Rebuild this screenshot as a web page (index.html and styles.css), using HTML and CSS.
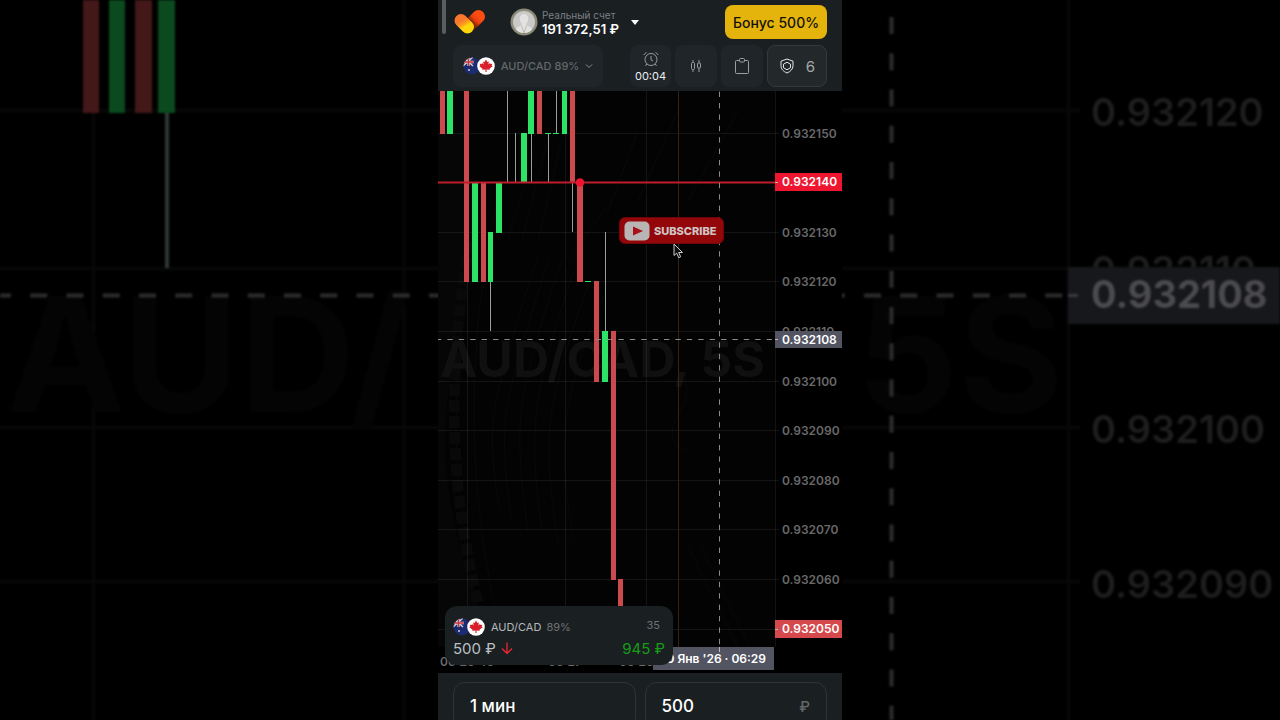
FILE: index.html
```html
<!DOCTYPE html>
<html lang="ru">

<head>
    <meta charset="UTF-8">
    <meta name="viewport" content="width=device-width, initial-scale=1.0">
    <title>AUD/CAD</title>
    <link rel="stylesheet" href="styles.css">
</head>

<body>
    <!-- Shared icons -->
    <svg class="sprite" aria-hidden="true">
        <symbol id="flags" viewBox="0 0 32 18">
            <clipPath id="auClip"><circle cx="9" cy="9" r="8.500" /></clipPath>
            <g clip-path="url(#auClip)">
                <rect width="18" height="18" fill="#1c2a70" />
                <path d="M0 0l10 9M10 0L0 9" stroke="#ccc" stroke-width="1.500" />
                <path d="M5.500 0v9M0 5h11" stroke="#ddd" stroke-width="2.400" />
                <path d="M5.500 0v9M0 5h11" stroke="#c8323c" stroke-width="1.400" />
                <circle cx="6" cy="13" r="0.900" fill="#ddd" />
            </g>
            <circle cx="23" cy="9" r="8.800" fill="#fff" />
            <path d="M23 2.500l1.400 2.600 1.500-.7-.6 3.200 1.700-1.600.5 1.100 1.800-.3-.6 1.900.9.500-3.100 2.500.3 1.100-3.300-.4.100 2.700h-1.200l.1-2.700-3.300.4.300-1.100-3.100-2.500.9-.5-.6-1.900 1.800.3.500-1.100 1.700 1.600-.6-3.200 1.500.7z" fill="#d8202c" />
        </symbol>
    </svg>

    <!-- Enlarged dim chart behind the phone -->
    <svg class="backdrop" viewBox="0 0 1280 720" preserveAspectRatio="xMidYMid slice" aria-hidden="true">
        <g class="backdrop-grid">
            <path d="M0 110.500H1080M0 268.500H1080M0 427.500H1080M0 581.500H1080" />
            <path d="M93.500 0V720M404 0V720M1068.500 0V720" />
        </g>
        <text class="backdrop-mark" x="6" y="412">AUD/</text>
        <text class="backdrop-mark" x="856" y="412">5S</text>
        <g class="backdrop-red">
            <rect x="83" y="0" width="16" height="113" />
            <rect x="135" y="0" width="17" height="113" />
        </g>
        <g class="backdrop-green">
            <rect x="109" y="0" width="16" height="113" />
            <rect x="158" y="0" width="17" height="113" />
        </g>
        <rect class="backdrop-wick" x="165" y="113" width="4" height="155" />
        <path class="backdrop-cross" d="M-6 295.500H1068" />
        <path class="backdrop-cross" d="M891.500 17V720" />
        <g class="backdrop-price">
            <text x="1091" y="126">0.932120</text>
            <text x="1091" y="284">0.932110</text>
            <text x="1091" y="443">0.932100</text>
            <text x="1091" y="598">0.932090</text>
        </g>
        <rect class="backdrop-tag" x="1068" y="267" width="212" height="57" />
        <path class="backdrop-tick" d="M1068 295.500h10" />
        <text class="backdrop-current" x="1091" y="308">0.932108</text>
    </svg>

    <main class="phone">
        <header class="top">
            <span class="scroll-thumb"></span>
            <div class="row">
                <svg class="logo" viewBox="0 0 32 26" role="img" aria-label="Логотип">
                    <defs>
                        <linearGradient id="logoLeft" x1="0" y1="0" x2="0.600" y2="1">
                            <stop offset="0" stop-color="#f7772d" />
                            <stop offset="0.500" stop-color="#fb961c" />
                            <stop offset="1" stop-color="#ffd60c" />
                        </linearGradient>
                        <linearGradient id="logoRight" x1="1" y1="0" x2="0" y2="1">
                            <stop offset="0" stop-color="#ff4d12" />
                            <stop offset="0.500" stop-color="#e8400c" />
                            <stop offset="1" stop-color="#7c2408" />
                        </linearGradient>
                    </defs>
                    <path d="M24.500 7.500L18 14" fill="none" stroke="url(#logoRight)" stroke-width="13" stroke-linecap="round" />
                    <path d="M7 11.500L13.500 18" fill="none" stroke="url(#logoLeft)" stroke-width="13" stroke-linecap="round" />
                </svg>
                <button class="account" type="button">
                    <svg class="avatar" viewBox="0 0 28 28">
                        <clipPath id="avatarClip"><circle cx="14" cy="14" r="11" /></clipPath>
                        <circle cx="14" cy="14" r="13.500" fill="#8c8a78" />
                        <circle cx="14" cy="14" r="11" fill="#c9c9c7" />
                        <g clip-path="url(#avatarClip)">
                            <path d="M5 26c0-6 3-7.500 6.500-8.500v-2c-1.300-1.500-1.700-3-1.700-5C9.800 7.500 11.500 6 14 6s4.200 1.500 4.200 4.500c0 2-.4 3.500-1.700 5v2C20 18.500 23 20 23 26z" fill="#e4e2e0" />
                            <path d="M11.500 17.500L14 25l2.500-7.500" fill="none" stroke="#bcbcba" />
                        </g>
                    </svg>
                    <span class="account-text">
                        <span class="account-name">Реальный счет</span>
                        <strong class="account-sum">191 372,51 ₽</strong>
                    </span>
                    <svg class="caret" viewBox="0 0 8 5"><path d="M0 0h8L4 5z" fill="#fff" /></svg>
                </button>
                <button class="bonus" type="button">Бонус 500%</button>
            </div>
            <div class="row tools">
                <button class="tool pair" type="button">
                    <svg class="flags"><use href="#flags" /></svg>
                    <span>AUD/CAD 89%</span>
                    <svg class="chevron" viewBox="0 0 8 6"><path d="M1 1.500l3 3 3-3" /></svg>
                </button>
                <button class="tool timer" type="button">
                    <svg class="icon" viewBox="0 0 16 16">
                        <circle cx="8" cy="8.500" r="6" />
                        <path d="M8 5v3.800l2 1.200M0.700 4l2.800-2.800M15.300 4l-2.800-2.800M3.800 13l-1.300 1.800M12.200 13l1.300 1.800" />
                    </svg>
                    <span>00:04</span>
                </button>
                <button class="tool" type="button" aria-label="Тип графика">
                    <svg class="icon" viewBox="0 0 16 16">
                        <path d="M5 2v2.500M5 11.500v2.500M11 2v3M11 10v4" />
                        <rect x="3.500" y="4.500" width="3" height="7" rx="1" />
                        <rect x="9.500" y="5" width="3" height="5" rx="1" />
                    </svg>
                </button>
                <button class="tool" type="button" aria-label="Сделки">
                    <svg class="icon" viewBox="0 0 16 16">
                        <path d="M5.500 2.500h-3a1 1 0 0 0-1 1v11a1 1 0 0 0 1 1h11a1 1 0 0 0 1-1v-11a1 1 0 0 0-1-1h-3" />
                        <rect x="5.500" y="0.500" width="5" height="3.500" rx="1" />
                    </svg>
                </button>
                <button class="tool shield" type="button">
                    <svg class="icon" viewBox="0 0 16 16">
                        <path d="M8 1l6 2.200v4.500c0 3.500-2.500 5.800-6 7.300-3.500-1.500-6-3.800-6-7.300V3.200z" />
                        <path d="M8 4.200l3.500 2v3.600L8 11.800l-3.500-2V6.200z" />
                    </svg>
                    <span>6</span>
                </button>
            </div>
        </header>

        <section class="chart">
            <svg class="chart-plot" viewBox="0 0 404 582" role="img" aria-label="График AUD/CAD">
                <rect width="404" height="582" fill="#000" />
                <rect width="337" height="556" fill="#030303" />

                <!-- Coin engraving -->
                <g class="engraving">
                    <path d="M0 0h29v190Q4 300 8 380Q20 480 60 556H0z" fill="#060606" stroke="none" />
                    <path d="M44 115Q-10 340 48 556M58 115Q10 340 66 556" />
                    <path d="M32 150Q-5 350 45 530" stroke-width="11" stroke-dasharray="12 4" />
                    <path d="M100 165Q72 250 60 300T62 420M112 165Q84 250 72 300T74 430M124 170Q96 250 86 300T90 440M136 180Q108 260 100 310T104 440M150 195Q122 270 114 320T120 450M166 205Q134 280 128 330T136 450" />
                    <path d="M96 60L70 150M112 40L84 150M128 30L100 150M180 100L130 170M200 40L170 120M240 20L200 110M300 20L250 110" />
                    <path d="M250 455L300 556M262 455L312 556M230 270q30 20 12 50t6 40" />
                </g>
                <text class="watermark" x="2" y="286">AUD/CAD, 5S</text>

                <g class="grid">
                    <path d="M0 42.500H341M0 141.500H341M0 190.500H341M0 240.500H341M0 290.500H341M0 339.500H341M0 389.500H341M0 438.500H341M0 488.500H341M0 538.500H341" />
                    <path d="M29.500 0V556M127.500 0V556M208.500 0V556M337.500 0V556" />
                </g>
                <path class="expiry" d="M240.500 0V556" />

                <g class="wick">
                    <path d="M52.500 190V240M69.500 0V91M77.500 42V91M93.500 42V91M110.500 42V91M118.500 0V42M134.500 91V141M167.500 141V240" />
                </g>
                <g class="up">
                    <rect x="9" y="0" width="6" height="43" />
                    <rect x="34" y="92" width="6" height="99" />
                    <rect x="50" y="141" width="5" height="50" />
                    <rect x="58" y="92" width="6" height="50" />
                    <rect x="83" y="42" width="6" height="49" />
                    <rect x="90" y="0" width="6" height="43" />
                    <rect x="107" y="42" width="6" height="1" />
                    <rect x="115" y="42" width="6" height="1" />
                    <rect x="124" y="0" width="5" height="43" />
                    <rect x="147" y="190" width="6" height="1" />
                    <rect x="164" y="240" width="6" height="51" />
                </g>
                <g class="down">
                    <rect x="2" y="0" width="5" height="43" />
                    <rect x="26" y="0" width="5" height="191" />
                    <rect x="43" y="92" width="5" height="99" />
                    <rect x="99" y="0" width="5" height="43" />
                    <rect x="132" y="0" width="5" height="91" />
                    <rect x="139" y="91" width="6" height="100" />
                    <rect x="156" y="190" width="5" height="101" />
                    <rect x="173" y="240" width="5" height="249" />
                    <rect x="180" y="488" width="5" height="50" />
                </g>

                <path class="entry" d="M0 91.500H337" />
                <circle cx="142" cy="91.500" r="4.300" fill="#ee1530" />
                <path class="cross" d="M-2 248.500H337" />
                <path class="cross" d="M281.500 0.600V560" />

                <g class="price">
                    <text x="344" y="47">0.932150</text>
                    <text x="344" y="146">0.932130</text>
                    <text x="344" y="195">0.932120</text>
                    <text x="344" y="245">0.932110</text>
                    <text x="344" y="295">0.932100</text>
                    <text x="344" y="344">0.932090</text>
                    <text x="344" y="394">0.932080</text>
                    <text x="344" y="443">0.932070</text>
                    <text x="344" y="493">0.932060</text>
                    <text x="2" y="575">06:26:45</text>
                    <text x="110" y="575">06:27</text>
                    <text x="181" y="575">06:28</text>
                </g>

                <rect x="337" y="82" width="67" height="18" fill="#ee1530" />
                <rect x="337" y="240" width="67" height="17" fill="#525462" />
                <rect x="337" y="529" width="67" height="18" fill="#d5484c" />
                <rect x="215" y="556" width="121" height="23" fill="#525462" />
                <path class="tick" d="M337 91.500h3M337 248.500h3M337 538.500h3M281.500 556v5" />
                <g class="tag">
                    <text x="344" y="95">0.932140</text>
                    <text x="344" y="253">0.932108</text>
                    <text x="344" y="542">0.932050</text>
                    <text x="328" y="572" text-anchor="end">30 Янв '26 · 06:29</text>
                </g>
            </svg>

            <button class="subscribe" type="button">
                <svg class="play" viewBox="0 0 26 20">
                    <rect x="0.500" y="0.500" width="25" height="19" rx="5" fill="#b9b5b5" />
                    <path d="M9 5.500l10 4.500-10 4.500z" fill="#a8101a" />
                </svg>
                <span>SUBSCRIBE</span>
            </button>
            <svg class="cursor" viewBox="0 0 11 16">
                <path d="M1 1v11.500l2.700-2.300 2 4.500 2-.9-2-4.300h3.800z" fill="#111" stroke="#ccc" />
            </svg>

            <article class="deal">
                <div class="deal-line">
                    <svg class="flags"><use href="#flags" /></svg>
                    <span class="deal-pair">AUD/CAD</span>
                    <span class="deal-muted">89%</span>
                    <span class="deal-muted deal-time">35</span>
                </div>
                <div class="deal-line deal-sums">
                    <span>500 ₽</span>
                    <svg class="arrow" viewBox="0 0 12 12"><path d="M6 0.500v11M1 6.500l5 5 5-5" /></svg>
                    <span class="deal-profit">945 ₽</span>
                </div>
            </article>
        </section>

        <form class="order">
            <label class="field">
                <input type="text" value="1 мин" aria-label="Время">
            </label>
            <label class="field">
                <input type="text" value="500" aria-label="Сумма">
                <span class="currency">₽</span>
            </label>
        </form>
    </main>
</body>

</html>
```

FILE: styles.css
```css
* {
    box-sizing: border-box;
}

body {
    margin: 0;
    background: #000;
    color: #fff;
    font-family: Inter, "Liberation Sans", sans-serif;
    overflow: hidden;
}

button,
input {
    font: inherit;
    color: inherit;
    border: none;
    padding: 0;
    background: none;
}

button {
    cursor: pointer;
}

svg {
    display: block;
    flex-shrink: 0;
}

.sprite {
    position: absolute;
    width: 0;
    height: 0;
}

/* Backdrop */
.backdrop {
    position: absolute;
    inset: 0;
    width: 100%;
    height: 100%;
    filter: blur(1px);
}

.backdrop-grid {
    stroke: #080808;
    stroke-width: 3;
}

.backdrop-mark {
    fill: #040404;
    font-size: 160px;
    font-weight: 700;
}

.backdrop-red {
    fill: #441819;
}

.backdrop-green {
    fill: #0a4a1e;
}

.backdrop-wick {
    fill: #303636;
}

.backdrop-cross {
    stroke: #2c2c2c;
    stroke-width: 4;
    stroke-dasharray: 17 19.250;
}

.backdrop-tick {
    stroke: #3a3b3f;
    stroke-width: 3;
}

.backdrop-tag {
    fill: #17181c;
}

.backdrop-price {
    fill: #1e1e1e;
    font-size: 38px;
    font-weight: 600;
}

.backdrop-current {
    fill: #4b4b4e;
    font-size: 38px;
    font-weight: 700;
}

/* Phone */
.phone {
    position: relative;
    display: flex;
    flex-direction: column;
    width: 100%;
    max-width: 404px;
    height: 100vh;
    margin: 0 auto;
    overflow: hidden;
    background: #000;
}

.top {
    position: relative;
    display: flex;
    flex-direction: column;
    flex-shrink: 0;
    gap: 6px;
    padding: 5px 15px 4px;
    background: #1a1f22;
}

.scroll-thumb {
    position: absolute;
    left: 4px;
    top: 0;
    width: 4px;
    height: 34px;
    border-radius: 0 0 2px 2px;
    background: #5a5e60;
}

.row {
    display: flex;
    align-items: center;
}

.logo {
    width: 34px;
    height: 26px;
}

.account {
    display: flex;
    align-items: center;
    margin-left: 23px;
    text-align: left;
}

.avatar {
    width: 28px;
    height: 28px;
}

.account-text {
    display: flex;
    flex-direction: column;
    margin: 0 12px 0 4px;
}

.account-name {
    color: #7b8082;
    font-size: 10px;
    line-height: 13px;
}

.account-sum {
    font-size: 13px;
    font-weight: 600;
    line-height: 14px;
}

.caret {
    width: 8px;
    height: 5px;
}

.bonus {
    width: 102px;
    height: 34px;
    margin-left: auto;
    border-radius: 8px;
    background: #e4b40c;
    color: #14110a;
    font-size: 14px;
    font-weight: 500;
}

.tools {
    gap: 4px;
}

.tool {
    display: flex;
    align-items: center;
    justify-content: center;
    width: 42px;
    height: 42px;
    border-radius: 8px;
    background: #1f2528;
}

.pair {
    justify-content: space-between;
    width: 150px;
    margin-right: auto;
    padding: 0 10px;
    color: #63686b;
    font-size: 11px;
    font-weight: 500;
}

.flags {
    width: 32px;
    height: 18px;
}

.chevron {
    width: 8px;
    height: 6px;
    fill: none;
    stroke: #8b9093;
}

.icon {
    width: 16px;
    height: 16px;
    fill: none;
    stroke: #9a9ea0;
}

.timer {
    flex-direction: column;
    gap: 2px;
    width: 41px;
    padding-top: 2px;
    color: #eceeef;
    font-size: 11px;
    line-height: 14px;
}

.shield {
    width: 60px;
    gap: 11px;
    border: 1px solid #34393c;
    background: #23282b;
    color: #a3a7a9;
    font-size: 15px;
}

.shield .icon {
    stroke: #e6e8e9;
}

/* Chart */
.chart {
    position: relative;
    flex-shrink: 0;
}

.chart-plot {
    width: 100%;
    height: auto;
}

.engraving {
    fill: none;
    stroke: #090909;
}

.watermark {
    fill: #101010;
    font-size: 50px;
    font-weight: 700;
}

.grid {
    stroke: #fff;
    stroke-opacity: 0.070;
}

.expiry {
    stroke: #33241a;
}

.wick {
    stroke: #96a09c;
}

.up {
    fill: #2ce365;
}

.down {
    fill: #cc4a4d;
}

.entry {
    stroke: #c01c2b;
    stroke-width: 2;
}

.cross {
    stroke: #8b8b8b;
    stroke-dasharray: 5.400 6;
}

.tick {
    stroke: #b9b9c0;
}

.price {
    fill: #696969;
    font-size: 12px;
    font-weight: 600;
}

.tag {
    fill: #fff;
    font-size: 12px;
    font-weight: 600;
}

.subscribe {
    position: absolute;
    left: 181px;
    top: 126px;
    display: flex;
    align-items: center;
    gap: 4px;
    height: 27px;
    padding: 0 7px 0 4px;
    border: 1px solid #6d0509;
    border-radius: 6px;
    background: #930609;
    color: #cfc4c4;
    font-size: 11px;
    font-weight: 800;
}

.play {
    width: 26px;
    height: 20px;
}

.cursor {
    position: absolute;
    left: 235px;
    top: 152px;
    width: 11px;
    height: 16px;
}

.deal {
    position: absolute;
    left: 7px;
    bottom: 8px;
    width: 228px;
    padding: 10px 8px 6px;
    border-radius: 12px;
    background: #1a1f22;
}

.deal-line {
    display: flex;
    align-items: center;
    gap: 5px;
    height: 21px;
    font-size: 11px;
}

.deal-pair {
    margin-left: 1px;
    color: #b4b8ba;
}

.deal-muted {
    color: #6d7274;
}

.deal-time {
    margin: 0 5px 4px auto;
}

.deal-sums {
    height: 22px;
    color: #bcc0c2;
    font-size: 15px;
}

.arrow {
    width: 12px;
    height: 12px;
    fill: none;
    stroke: #ef2634;
    stroke-width: 1.300;
}

.deal-profit {
    margin-left: auto;
    color: #189c18;
}

/* Order form */
.order {
    display: flex;
    flex-shrink: 0;
    gap: 9px;
    padding: 9px 15px;
    background: #1a1f22;
}

.field {
    display: flex;
    flex: 1;
    align-items: center;
    min-width: 0;
    height: 48px;
    padding: 0 16px;
    border: 1px solid #2e3336;
    border-radius: 12px;
    font-size: 17px;
    font-weight: 500;
}

.field input {
    flex: 1;
    min-width: 0;
    outline: none;
}

.currency {
    color: #62676a;
    font-size: 15px;
}
```
